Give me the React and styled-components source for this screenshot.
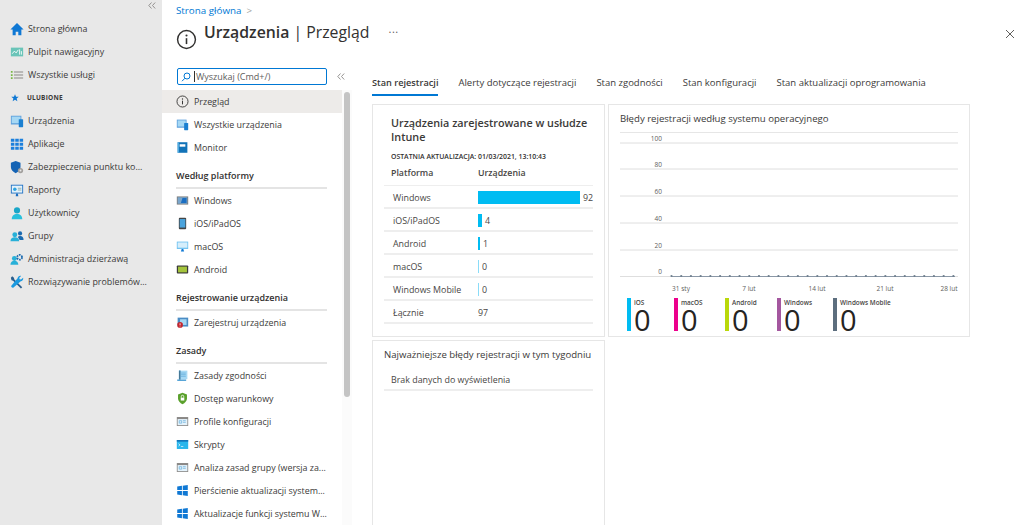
import React from "react";
import styled, { createGlobalStyle } from "styled-components";

const GlobalStyle = createGlobalStyle`
  html, body { margin: 0; padding: 0; background: #fff; }
  body { font-family: "Open Sans", "Noto Sans", sans-serif; color: #323130; }
`;

const Page = styled.div`
  width: 1024px;
  height: 525px;
  display: flex;
  overflow: hidden;
  background: #fff;
`;

/* lewy pasek portalu */
const Sidebar = styled.nav`
  width: 162px;
  flex: none;
  background: #e8e8e8;
  display: flex;
  flex-direction: column;
`;
const SideTop = styled.div`
  height: 17px;
  box-sizing: border-box;
  display: flex;
  justify-content: flex-end;
  align-items: flex-start;
  padding: 2px 6px 0 0;
`;
const SideList = styled.div`
  display: flex;
  flex-direction: column;
`;
const SideRow = styled.div`
  height: 23px;
  display: flex;
  align-items: center;
  gap: 4px;
  padding-left: 10px;
  font-size: 8.9px;
  white-space: nowrap;
  color: #3b3a39;
  svg { flex: none; }
`;
const FavLabel = styled.span`
  font-size: 6.5px;
  font-weight: 700;
  letter-spacing: 0.2px;
  margin-left: 3px;
`;

const Main = styled.div`
  flex: 1;
  min-width: 0;
  display: flex;
  flex-direction: column;
`;
const Header = styled.header`
  height: 63px;
  box-sizing: border-box;
  flex: none;
  padding: 3px 7px 0 14px;
  display: flex;
  flex-direction: column;
`;
const Crumbs = styled.div`
  display: flex;
  align-items: center;
  gap: 5px;
  font-size: 9.8px;
  height: 14px;
  color: #0078d4;
  span { color: #a19f9d; }
`;
const TitleRow = styled.div`
  display: flex;
  align-items: flex-start;
  margin-top: 4px;
`;
const TitleIcon = styled.div`
  width: 21px;
  height: 21px;
  margin-top: 8px;
  flex: none;
`;
const Title = styled.h1`
  margin: 0 0 0 7px;
  font-size: 15.8px;
  line-height: 22px;
  font-weight: 400;
  white-space: nowrap;
  b { font-weight: 600; }
`;
const More = styled.span`
  margin-left: 19px;
  font-size: 11px;
  line-height: 16px;
  letter-spacing: 0.5px;
  color: #605e5c;
`;
const Close = styled.div`
  margin-left: auto;
  margin-top: 3px;
  width: 14px;
  height: 14px;
`;

const Body = styled.div`
  flex: 1;
  min-height: 0;
  display: flex;
`;

/* menu blade */
const Blade = styled.aside`
  width: 190px;
  flex: none;
  display: flex;
  flex-direction: column;
`;
const SearchRow = styled.div`
  height: 27px;
  box-sizing: border-box;
  flex: none;
  display: flex;
  align-items: flex-start;
  padding: 5px 0 0 15px;
  gap: 10px;
`;
const SearchBox = styled.div`
  width: 150px;
  height: 17px;
  box-sizing: border-box;
  border: 1px solid #0078d4;
  border-radius: 2px;
  display: flex;
  align-items: center;
  padding-left: 3px;
  font-size: 9px;
  color: #605e5c;
  white-space: nowrap;
`;
const Caret = styled.i`
  width: 1px;
  height: 11px;
  background: #323130;
  margin: 0 1px 0 3px;
`;
const CollapseBtn = styled.div`
  margin-top: 5px;
  line-height: 0;
`;
const BladeBody = styled.div`
  flex: 1;
  min-height: 0;
  display: flex;
`;
const BladeList = styled.div`
  width: 180px;
  flex: none;
  display: flex;
  flex-direction: column;
`;
const BladeRow = styled.div`
  height: 23px;
  flex: none;
  display: flex;
  align-items: center;
  gap: 5px;
  padding-left: 14px;
  font-size: 8.9px;
  white-space: nowrap;
  color: #3b3a39;
  background: ${(p) => (p.$active ? "#edebe9" : "transparent")};
  svg { flex: none; }
`;
const BladeSection = styled.div`
  margin: 10px 15px 0 14px;
  line-height: 14px;
  padding-bottom: 4px;
  flex: none;
  border-bottom: 2px solid #e4e4e4;
  font-size: 9px;
  font-weight: 600;
  color: #323130;
  white-space: nowrap;
`;
const ScrollTrack = styled.div`
  width: 10px;
  flex: none;
  background: #fbfbfb;
  display: flex;
  justify-content: center;
  padding-top: 2px;
`;
const ScrollThumb = styled.div`
  width: 6px;
  height: 305px;
  border-radius: 3px;
  background: #c4c4c4;
`;

/* zawartość */
const Content = styled.section`
  flex: 1;
  min-width: 0;
  padding-left: 20px;
  display: flex;
  flex-direction: column;
`;
const Tabs = styled.div`
  height: 32px;
  flex: none;
  display: flex;
  gap: 20px;
  font-size: 9.5px;
  color: #3b3a39;
  white-space: nowrap;
`;
const Tab = styled.div`
  height: 26px;
  padding-top: 6px;
  line-height: 14px;
  box-sizing: border-box;
  margin-top: 7px;
  font-weight: ${(p) => (p.$active ? 600 : 400)};
  font-size: ${(p) => (p.$active ? "9.2px" : "9.5px")};
  border-bottom: ${(p) => (p.$active ? "2px solid #0078d4" : "none")};
`;
const Cards = styled.div`
  flex: 1;
  display: grid;
  grid-template-columns: 233px 362px;
  grid-template-rows: 233px 1fr;
  gap: 3px;
  margin-top: 9px;
  margin-bottom: -20px;
`;
const Card = styled.div`
  box-sizing: border-box;
  border: 1px solid #e6e6e6;
  min-width: 0;
`;
const StatusCard = styled(Card)`
  padding: 11px 11px 0 11px;
`;
const CardTitle = styled.h2`
  margin: 0 0 0 7px;
  font-size: 10.8px;
  line-height: 14px;
  font-weight: 600;
  color: #3b3a39;
`;
const Updated = styled.div`
  margin: 8px 0 0 7px;
  font-size: 6.9px;
  line-height: 9px;
  font-weight: 600;
  white-space: nowrap;
`;
const TableHead = styled.div`
  display: grid;
  grid-template-columns: 87px 1fr;
  height: 25px;
  align-items: center;
  padding: 0 0 1px 7px;
  box-sizing: border-box;
  font-size: 8.8px;
  font-weight: 600;
  color: #484644;
  border-bottom: 1px solid #eee;
`;
const TableRow = styled.div`
  display: grid;
  grid-template-columns: 85px 1fr;
  height: 23px;
  box-sizing: border-box;
  align-items: center;
  padding: 1px 0 0 9px;
  font-size: 8.9px;
  color: #484644;
  border-bottom: 2px solid #eee;
  white-space: nowrap;
`;
const BarCell = styled.div`
  display: flex;
  align-items: center;
  gap: 3px;
`;
const Bar = styled.div`
  height: 13px;
  background: ${(p) => (p.$faint ? "#8adcf8" : "#00bcf2")};
`;
const ChartCard = styled(Card)`
  padding: 7px 11px 0 11px;
`;
const ChartTitle = styled.h2`
  margin: 0;
  font-size: 9.6px;
  line-height: 14px;
  font-weight: 400;
  color: #3b3a39;
`;
const ChartSvg = styled.svg`
  display: block;
  margin-top: 6px;
`;
const Legend = styled.div`
  display: flex;
  margin: 4px 0 0 7px;
`;
const LegendItem = styled.div`
  width: ${(p) => p.$w}px;
  height: 33px;
  flex: none;
  display: flex;
  gap: 3px;
`;
const LegendBar = styled.div`
  width: 4px;
  height: 33px;
  background: ${(p) => p.$c};
  flex: none;
`;
const LegendText = styled.div`
  display: flex;
  flex-direction: column;
`;
const LegendName = styled.span`
  font-size: 6.4px;
  line-height: 9px;
  font-weight: 600;
  color: #484644;
  white-space: nowrap;
`;
const LegendValue = styled.span`
  font-size: 29px;
  line-height: 25px;
  color: #252423;
`;
const ErrorsCard = styled(Card)`
  padding: 7px 11px 0 11px;
`;
const ErrorsTitle = styled.h2`
  margin: 0;
  font-size: 9.6px;
  line-height: 14px;
  font-weight: 400;
  white-space: nowrap;
  color: #3b3a39;
`;
const EmptyRow = styled.div`
  height: 25px;
  margin-top: 4px;
  box-sizing: border-box;
  padding: 8px 0 0 7px;
  font-size: 8.9px;
  line-height: 12px;
  color: #484644;
  border-bottom: 2px solid #eee;
`;

/* ikony */
const Ico = ({ s = 14, children }) => (
  <svg width={s} height={s} viewBox="0 0 16 16">{children}</svg>
);
const DoubleChevron = () => (
  <svg width="8" height="7" viewBox="0 0 8 7">
    <path d="M3.500.5.800 3.500l2.700 3M7.200.5 4.500 3.500l2.700 3" fill="none" stroke="#8a8886" strokeWidth="0.900" />
  </svg>
);
const icons = {
  home: <path d="M8 1 0.5 8.5H3V15h3.5v-4h3v4H13V8.5h2.5z" fill="#0f78d4" />,
  dash: (<>
    <rect x="1" y="3" width="14" height="10" fill="#6ac4b8" />
    <path d="M2.5 10 5 7l2 2 2.500-3.500M11 5v6M13 7v4" stroke="#fff" strokeWidth="1" fill="none" />
  </>),
  all: (<>
    <path d="M1 3.500h2v2H1zM1 7h2v2H1zM1 10.500h2v2H1z" fill="#7ab648" />
    <path d="M4.500 4.500H15M4.500 8H15M4.500 11.500H15" stroke="#8a8886" strokeWidth="1.200" />
  </>),
  star: <path d="M8 2l1.700 4h4.300l-3.400 2.700 1.200 4.300L8 10.600 4.200 13l1.200-4.300L2 6h4.300z" fill="#0f78d4" />,
  devices: (<>
    <rect x="1" y="2" width="12" height="10" fill="#5ea0dc" />
    <rect x="2" y="3" width="10" height="7.500" fill="#a6d8f4" />
    <rect x="10" y="6" width="5" height="9" rx="0.700" fill="#1a7fd0" />
  </>),
  apps: (<>
    <path d="M1 2h4v3.500H1zM6 2h4v3.500H6zM11 2h4v3.500h-4zM1 6.500h4V10H1zM6 6.500h4V10H6zM11 6.500h4V10h-4zM1 11h4v3.500H1zM6 11h4v3.500H6zM11 11h4v3.500h-4z" fill="#1b7fdc" />
  </>),
  shield: (<>
    <path d="M6.500 1 1 3v5c0 3.500 2.500 5.500 5.500 7 3-1.500 5.500-3.500 5.500-7V3z" fill="#1463b4" />
    <circle cx="12" cy="12" r="3" fill="#a19f9d" />
    <circle cx="12" cy="12" r="1.100" fill="#e8e8e8" />
  </>),
  report: (<>
    <rect x="1" y="2" width="14" height="10" fill="#1b6ec2" />
    <rect x="2" y="3" width="12" height="8" fill="#e4f2fb" />
    <circle cx="5.500" cy="7" r="2" fill="#2ea3e0" />
    <path d="M9 6h4M9 8h4" stroke="#8aa" strokeWidth="1" />
    <path d="M6.500 15h3l-.5-3H7z" fill="#1b6ec2" />
  </>),
  user: (<>
    <circle cx="8" cy="5" r="3.500" fill="#1aa6c8" />
    <path d="M2 15c0-4 2.500-6 6-6s6 2 6 6z" fill="#28c0dc" />
  </>),
  group: (<>
    <circle cx="5.500" cy="6.500" r="2.800" fill="#28b0d8" />
    <path d="M0.500 14c0-3 2-4.500 5-4.500s5 1.500 5 4.500z" fill="#28b0d8" />
    <circle cx="11.500" cy="5" r="2.400" fill="#1a6ab0" />
    <path d="M9 9c1-1 4-1.500 5.500 0 .7.800 1 2 1 3.500H11z" fill="#1a6ab0" />
  </>),
  admin: (<>
    <circle cx="5" cy="7.500" r="2.800" fill="#28b0d8" />
    <path d="M0.500 14.500c0-3 2-4.500 4.500-4.500s4.500 1.500 4.500 4.500z" fill="#28b0d8" />
    <circle cx="11" cy="6" r="2.800" fill="none" stroke="#1a6ab0" strokeWidth="2" strokeDasharray="2 1" />
  </>),
  tools: (<>
    <path d="M2.500 1.500 4.500 3.200 5 5l9 9-1.500 1.500-9-9-1.800-.5L1 3z" fill="#2a5f8e" />
    <path d="M15 3.200l-2.400 2-1.600-.4-.4-1.600L12.700 1c-1.800-.5-3.800.6-4 2.600L1.500 12.300c-.7 1 1.100 2.900 2.200 2.200l8.600-7.300c2.100-.1 3.200-2.100 2.700-4z" fill="#1b9ae0" />
  </>),
  info: (<>
    <circle cx="8" cy="8" r="6.800" fill="none" stroke="#323130" strokeWidth="1.100" />
    <path d="M8 7v4.500" stroke="#323130" strokeWidth="1.200" />
    <circle cx="8" cy="4.900" r="0.800" fill="#323130" />
  </>),
  monitor: (<>
    <rect x="2" y="1.500" width="12" height="13" fill="#1273b8" />
    <rect x="4.500" y="4" width="7" height="3" fill="#fff" />
    <path d="M2 1.500h1.500v13H2z" fill="#5bb5e8" />
  </>),
  windows: (<>
    <rect x="1" y="3" width="14" height="10" fill="#7a7a7a" />
    <rect x="2" y="4" width="12" height="8" fill="#7aa6cc" />
    <path d="M8 5h5v6H6z" fill="#1b6ec2" />
  </>),
  ios: (<>
    <rect x="3.500" y="1" width="9" height="14" rx="1.200" fill="#444" />
    <rect x="4.500" y="2.500" width="7" height="10.500" fill="#4aa3dc" />
  </>),
  mac: (<>
    <rect x="1" y="2" width="14" height="9" fill="#6cc0f0" />
    <rect x="2" y="3" width="12" height="6.500" fill="#d6eefb" />
    <path d="M6 14h4l-1-3H7z" fill="#0f78d4" />
  </>),
  android: (<>
    <rect x="1" y="3" width="14" height="10" rx="1" fill="#3a3a3a" />
    <rect x="2.500" y="4.500" width="11" height="7" fill="#a4c43c" />
  </>),
  enroll: (<>
    <rect x="2" y="2" width="13" height="11" fill="#4a8cc4" />
    <rect x="5" y="4" width="8" height="7" fill="#a6d8f4" />
    <circle cx="5" cy="11" r="3.500" fill="#c4262e" />
    <path d="M5 9v2.500M5 12.500v.5" stroke="#fff" strokeWidth="1" />
  </>),
  policy: (<>
    <path d="M4 2h10v10.500H4z" fill="#a6d8f4" />
    <path d="M1.500 13h11v1.500h-11z" fill="#2a8ccc" />
    <path d="M4 2h1.200v11H4zM6 5h6M6 7h6M6 9h6" stroke="#5aa8d8" strokeWidth="0.800" />
  </>),
  access: (<>
    <path d="M8 1l5.500 2v5c0 3.200-2.500 5.500-5.500 7-3-1.500-5.500-3.800-5.500-7V3z" fill="#5aa02c" />
    <rect x="5.800" y="7" width="4.400" height="3.500" fill="#fff" />
    <path d="M6.500 7V5.500a1.500 1.500 0 0 1 3 0V7" stroke="#fff" fill="none" />
  </>),
  profile: (<>
    <rect x="1" y="2.500" width="14" height="11" fill="#8a8886" />
    <rect x="2" y="5" width="12" height="7.500" fill="#e4f2fb" />
    <path d="M4 7h3v3H4zM8.500 7H12M8.500 9H12" stroke="#5aa8d8" strokeWidth="0.800" fill="none" />
  </>),
  script: (<>
    <rect x="1" y="2.500" width="14" height="11" fill="#29b6ec" />
    <rect x="1" y="2.500" width="14" height="2" fill="#1273b8" />
    <path d="M3 7l2 1.500L3 10M6 10.500h3" stroke="#fff" strokeWidth="0.800" fill="none" />
  </>),
  win: <path d="M1.500 3.200 7.300 2.300v5.200H1.500zM8.300 2.100 14.500 1.300v6.200H8.300zM1.500 8.500h5.800v5.200l-5.800-.9zM8.300 8.500h6.200v6.200l-6.200-.8z" fill="#0f78d4" />,
};

const sideItems = [
  ["home", "Strona główna"],
  ["dash", "Pulpit nawigacyjny"],
  ["all", "Wszystkie usługi"],
  ["star", "ULUBIONE", true],
  ["devices", "Urządzenia"],
  ["apps", "Aplikacje"],
  ["shield", "Zabezpieczenia punktu ko..."],
  ["report", "Raporty"],
  ["user", "Użytkownicy"],
  ["group", "Grupy"],
  ["admin", "Administracja dzierżawą"],
  ["tools", "Rozwiązywanie problemów..."],
];

const bladeGroups = [
  { items: [["info", "Przegląd", true], ["devices", "Wszystkie urządzenia"], ["monitor", "Monitor"]] },
  { title: "Według platformy", items: [["windows", "Windows"], ["ios", "iOS/iPadOS"], ["mac", "macOS"], ["android", "Android"]] },
  { title: "Rejestrowanie urządzenia", items: [["enroll", "Zarejestruj urządzenia"]] },
  {
    title: "Zasady",
    items: [
      ["policy", "Zasady zgodności"],
      ["access", "Dostęp warunkowy"],
      ["profile", "Profile konfiguracji"],
      ["script", "Skrypty"],
      ["profile", "Analiza zasad grupy (wersja za..."],
      ["win", "Pierścienie aktualizacji system..."],
      ["win", "Aktualizacje funkcji systemu W..."],
    ],
  },
];

const tabs = ["Stan rejestracji", "Alerty dotyczące rejestracji", "Stan zgodności", "Stan konfiguracji", "Stan aktualizacji oprogramowania"];

const rows = [
  ["Windows", 102, 92],
  ["iOS/iPadOS", 4, 4],
  ["Android", 2, 1],
  ["macOS", 1, 0, true],
  ["Windows Mobile", 1, 0, true],
];

const legend = [
  ["iOS", "#00bcf2", 47],
  ["macOS", "#ec008c", 51],
  ["Android", "#bad80a", 52],
  ["Windows", "#a4579f", 56],
  ["Windows Mobile", "#5c6e7e", 90],
];

function Chart() {
  const gridY = [11, 37, 64, 91, 118, 144.5];
  const labels = [100, 80, 60, 40, 20, 0];
  const dots = Array.from({ length: 30 }, (_, i) => 51.5 + i * 9.72);
  const ticks = [["31 sty", 61], ["7 lut", 129], ["14 lut", 197], ["21 lut", 265], ["28 lut", 329]];
  return (
    <ChartSvg width="340" height="162" viewBox="0 0 340 162">
      <line x1="0" x2="338" y1="0.500" y2="0.500" stroke="#e6e6e6" />
      {gridY.map((y, i) => (
        <g key={y}>
          <line x1="0" x2="338" y1={y} y2={y} stroke="#dedede" />
          <text x="42" y={y - 2.500} fontSize="6.500" fill="#605e5c" textAnchor="end" fontFamily="Open Sans">{labels[i]}</text>
        </g>
      ))}
      <line x1="51" x2="335" y1="144.500" y2="144.500" stroke="#8a97a6" />
      {dots.map((x) => <circle key={x} cx={x} cy="144" r="1.100" fill="#6f7f8e" />)}
      {ticks.map(([t, x]) => (
        <text key={t} x={x} y="158.500" fontSize="6.500" fill="#605e5c" textAnchor="middle" fontFamily="Open Sans">{t}</text>
      ))}
    </ChartSvg>
  );
}

export default function App() {
  return (
    <Page>
      <GlobalStyle />
      <Sidebar>
        <SideTop><DoubleChevron /></SideTop>
        <SideList>
          {sideItems.map(([icon, label, fav]) => (
            <SideRow key={label}>
              <Ico s={fav ? 10 : 14}>{icons[icon]}</Ico>
              {fav ? <FavLabel>{label}</FavLabel> : label}
            </SideRow>
          ))}
        </SideList>
      </Sidebar>
      <Main>
        <Header>
          <Crumbs>Strona główna <span>&gt;</span></Crumbs>
          <TitleRow>
            <TitleIcon><Ico s={21}>{icons.info}</Ico></TitleIcon>
            <Title><b>Urządzenia</b> | Przegląd</Title>
            <More>...</More>
            <Close>
              <svg width="14" height="14" viewBox="0 0 14 14">
                <path d="M3 3l8 8M11 3l-8 8" stroke="#605e5c" strokeWidth="1" />
              </svg>
            </Close>
          </TitleRow>
        </Header>
        <Body>
          <Blade>
            <SearchRow>
              <SearchBox>
                <svg width="10" height="10" viewBox="0 0 10 10">
                  <circle cx="6" cy="4" r="3" fill="none" stroke="#0078d4" />
                  <path d="M4 6.200 1 9.200" stroke="#0078d4" />
                </svg>
                <Caret />
                Wyszukaj (Cmd+/)
              </SearchBox>
              <CollapseBtn><DoubleChevron /></CollapseBtn>
            </SearchRow>
            <BladeBody>
              <BladeList>
                {bladeGroups.map((g, i) => (
                  <React.Fragment key={i}>
                    {g.title && <BladeSection>{g.title}</BladeSection>}
                    {g.items.map(([icon, label, active]) => (
                      <BladeRow key={label} $active={active}>
                        <Ico s={13}>{icons[icon]}</Ico>
                        {label}
                      </BladeRow>
                    ))}
                  </React.Fragment>
                ))}
              </BladeList>
              <ScrollTrack><ScrollThumb /></ScrollTrack>
            </BladeBody>
          </Blade>
          <Content>
            <Tabs>
              {tabs.map((t, i) => <Tab key={t} $active={i === 0}>{t}</Tab>)}
            </Tabs>
            <Cards>
              <StatusCard>
                <CardTitle>Urządzenia zarejestrowane w usłudze Intune</CardTitle>
                <Updated>OSTATNIA AKTUALIZACJA: 01/03/2021, 13:10:43</Updated>
                <TableHead><span>Platforma</span><span>Urządzenia</span></TableHead>
                {rows.map(([name, w, v, faint]) => (
                  <TableRow key={name}>
                    <span>{name}</span>
                    <BarCell>
                      <Bar $faint={faint} style={{ width: w }} />
                      <span>{v}</span>
                    </BarCell>
                  </TableRow>
                ))}
                <TableRow><span>Łącznie</span><span>97</span></TableRow>
              </StatusCard>
              <ChartCard>
                <ChartTitle>Błędy rejestracji według systemu operacyjnego</ChartTitle>
                <Chart />
                <Legend>
                  {legend.map(([name, c, w]) => (
                    <LegendItem key={name} $w={w}>
                      <LegendBar $c={c} />
                      <LegendText>
                        <LegendName>{name}</LegendName>
                        <LegendValue>0</LegendValue>
                      </LegendText>
                    </LegendItem>
                  ))}
                </Legend>
              </ChartCard>
              <ErrorsCard>
                <ErrorsTitle>Najważniejsze błędy rejestracji w tym tygodniu</ErrorsTitle>
                <EmptyRow>Brak danych do wyświetlenia</EmptyRow>
              </ErrorsCard>
            </Cards>
          </Content>
        </Body>
      </Main>
    </Page>
  );
}
